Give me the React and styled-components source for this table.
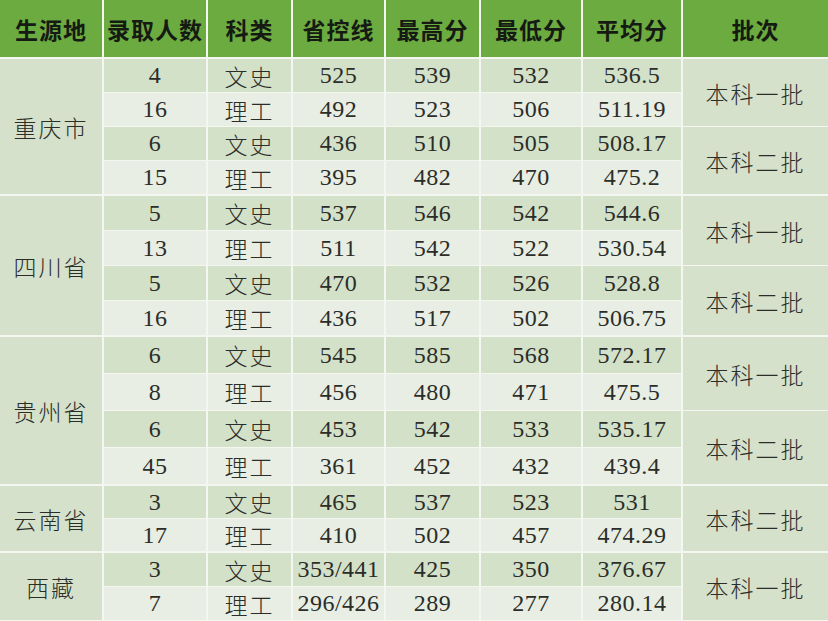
import styled, { createGlobalStyle } from "styled-components";

const GlobalStyle = createGlobalStyle`
  html, body {
    margin: 0;
    padding: 0;
    background: #f2f5ef;
  }
`;

const COLS = "102px 102px 83px 91px 93px 100px 98px 1fr";

const Table = styled.div`
  width: 828px;
  height: 621px;
  display: flex;
  flex-direction: column;
  gap: 2px;
  background: #f4f7f1;
  overflow: hidden;
`;

const HeadRow = styled.div`
  display: grid;
  grid-template-columns: ${COLS};
  grid-template-rows: 57px;
  column-gap: 2px;
`;

const HeadCell = styled.div`
  background: #6cab40;
  display: flex;
  align-items: center;
  justify-content: center;
  font-family: "Noto Sans CJK SC", sans-serif;
  font-weight: 700;
  font-size: 23px;
  color: #151a12;
  letter-spacing: 1px;
`;

const Group = styled.div`
  display: grid;
  grid-template-columns: ${COLS};
  grid-template-rows: repeat(${(p) => p.$rows}, ${(p) => p.$h}px);
  column-gap: 2px;
  row-gap: 1px;
`;

const Cell = styled.div`
  grid-row: ${(p) => p.$row};
  grid-column: ${(p) => p.$col};
  background: ${(p) => (p.$light ? "#e8eee4" : "#d4e1c9")};
  display: flex;
  align-items: center;
  justify-content: center;
  font-family: ${(p) =>
    p.$cjk ? `"Noto Sans CJK SC", sans-serif` : `"Liberation Serif", "Times New Roman", serif`};
  font-weight: ${(p) => (p.$cjk ? 300 : 400)};
  font-size: ${(p) => (p.$cjk ? "23px" : "24px")};
  color: #2b2d29;
  white-space: nowrap;
  letter-spacing: ${(p) => (p.$cjk ? "2px" : "0.5px")};
`;

const SideCell = styled(Cell)`
  background: #d5e1cb;
`;

const head = ["生源地", "录取人数", "科类", "省控线", "最高分", "最低分", "平均分", "批次"];

const groups = [
  {
    name: "重庆市",
    h: 33,
    rows: [
      ["4", "文史", "525", "539", "532", "536.5"],
      ["16", "理工", "492", "523", "506", "511.19"],
      ["6", "文史", "436", "510", "505", "508.17"],
      ["15", "理工", "395", "482", "470", "475.2"],
    ],
    batches: ["本科一批", "本科二批"],
  },
  {
    name: "四川省",
    h: 34,
    rows: [
      ["5", "文史", "537", "546", "542", "544.6"],
      ["13", "理工", "511", "542", "522", "530.54"],
      ["5", "文史", "470", "532", "526", "528.8"],
      ["16", "理工", "436", "517", "502", "506.75"],
    ],
    batches: ["本科一批", "本科二批"],
  },
  {
    name: "贵州省",
    h: 36,
    rows: [
      ["6", "文史", "545", "585", "568", "572.17"],
      ["8", "理工", "456", "480", "471", "475.5"],
      ["6", "文史", "453", "542", "533", "535.17"],
      ["45", "理工", "361", "452", "432", "439.4"],
    ],
    batches: ["本科一批", "本科二批"],
  },
  {
    name: "云南省",
    h: 32,
    rows: [
      ["3", "文史", "465", "537", "523", "531"],
      ["17", "理工", "410", "502", "457", "474.29"],
    ],
    batches: ["本科二批"],
  },
  {
    name: "西藏",
    h: 33,
    rows: [
      ["3", "文史", "353/441", "425", "350", "376.67"],
      ["7", "理工", "296/426", "289", "277", "280.14"],
    ],
    batches: ["本科一批"],
  },
];

const App = () => (
  <>
    <GlobalStyle />
    <Table>
      <HeadRow>
        {head.map((h) => (
          <HeadCell key={h}>{h}</HeadCell>
        ))}
      </HeadRow>
      {groups.map((g) => (
        <Group key={g.name} $rows={g.rows.length} $h={g.h}>
          <SideCell $cjk $col="1" $row="1 / -1">
            {g.name}
          </SideCell>
          {g.rows.map((r, i) =>
            r.map((v, j) => (
              <Cell
                key={`${i}-${j}`}
                $cjk={j === 1}
                $light={i % 2 === 1}
                $row={i + 1}
                $col={j + 2}
              >
                {v}
              </Cell>
            ))
          )}
          {g.batches.map((b, k) => (
            <SideCell key={k} $cjk $col="8" $row={`${k * 2 + 1} / span 2`}>
              {b}
            </SideCell>
          ))}
        </Group>
      ))}
    </Table>
  </>
);

export default App;
